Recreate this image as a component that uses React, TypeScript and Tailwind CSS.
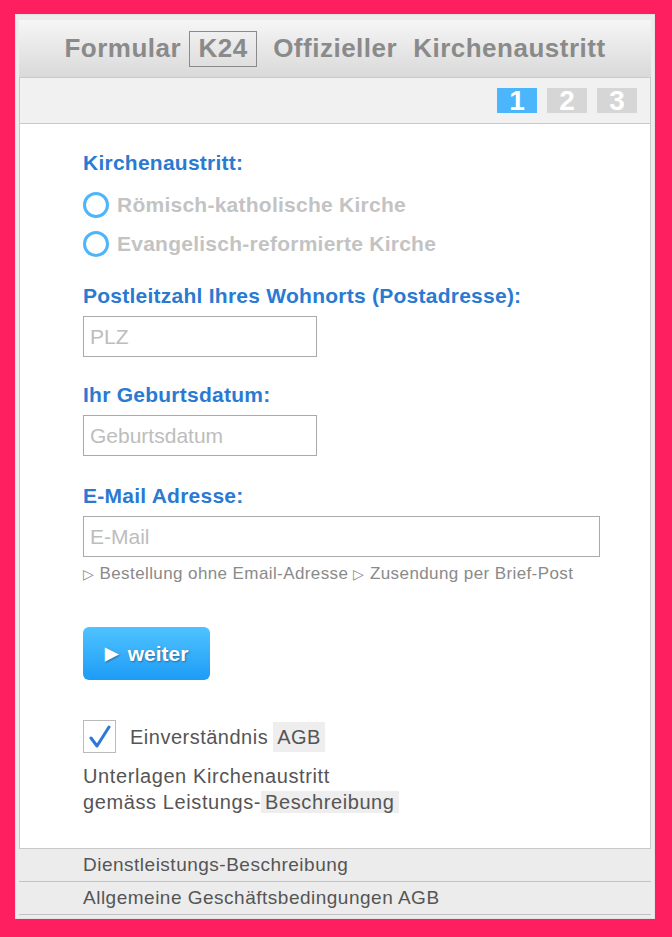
import React from "react";

const font = { fontFamily: '"Liberation Sans", Arial, sans-serif' };

function Radio({ label }: { label: string }) {
  return (
    <div className="flex h-[39px] items-center">
      <span className="h-[26px] w-[26px] shrink-0 rounded-full border-[3px] border-[#4db5fb] bg-white" />
      <span className="ml-[8px] text-[21px] font-bold tracking-[0.25px] text-[#c3c3c3]">{label}</span>
    </div>
  );
}

function Field({ label, placeholder, wide }: { label: string; placeholder: string; wide?: boolean }) {
  return (
    <div className="flex flex-col">
      <div className="text-[21px] font-bold leading-[24px] tracking-[0.25px] text-[#2a7ad2]">{label}</div>
      <div
        className={
          "mt-[8px] flex h-[41px] items-center border border-[#aaaaaa] bg-white px-[6px] text-[21px] text-[#bdbdbd] " +
          (wide ? "w-[517px]" : "w-[234px]")
        }
      >
        {placeholder}
      </div>
    </div>
  );
}

export default function App() {
  return (
    <div className="min-h-screen bg-[#fd1f60] pb-[18px] pl-[15px] pr-[17px] pt-[14px]" style={font}>
      <div className="flex h-[905px] flex-col border border-[#e2e2e2] bg-[#ececec] px-[3px] pt-[5px]">
        {/* title */}
        <div className="flex h-[57px] items-center justify-center bg-gradient-to-b from-[#f6f6f6] to-[#d9d9d9] text-[26px] font-bold tracking-[0.5px] text-[#8a8a8a]">
          <span>Formular</span>
          <span className="ml-[8px] flex h-[36px] w-[68px] items-center justify-center border border-[#8a8a8a]">K24</span>
          <span className="ml-[16px]">Offizieller</span>
          <span className="ml-[16px]">Kirchenaustritt</span>
        </div>

        <div className="flex flex-col border border-[#c9c9c9]">
          {/* steps */}
          <div className="flex h-[46px] justify-end gap-[10px] border-b border-[#c9c9c9] bg-[#f1f1f1] pr-[13px] pt-[10px]">
            <span className="flex h-[25px] w-[40px] items-center justify-center bg-[#4bb6fb] text-[28px] font-bold text-white">1</span>
            <span className="flex h-[25px] w-[40px] items-center justify-center bg-[#d6d6d6] text-[28px] font-bold text-white">2</span>
            <span className="flex h-[25px] w-[40px] items-center justify-center bg-[#d6d6d6] text-[28px] font-bold text-white">3</span>
          </div>

          {/* form */}
          <div className="flex h-[724px] flex-col bg-white pl-[63px] pt-[27px]">
            <div className="text-[21px] font-bold leading-[24px] tracking-[0.25px] text-[#2a7ad2]">Kirchenaustritt:</div>
            <div className="mt-[10px] flex flex-col">
              <Radio label="Römisch-katholische Kirche" />
              <Radio label="Evangelisch-reformierte Kirche" />
            </div>

            <div className="mt-[21px]">
              <Field label="Postleitzahl Ihres Wohnorts (Postadresse):" placeholder="PLZ" />
            </div>
            <div className="mt-[26px]">
              <Field label="Ihr Geburtsdatum:" placeholder="Geburtsdatum" />
            </div>
            <div className="mt-[28px]">
              <Field label="E-Mail Adresse:" placeholder="E-Mail" wide />
            </div>
            <div className="mt-[7px] text-[17px] leading-[20px] tracking-[0.4px] text-[#8a8a8a]">
              <span className="text-[14px]">▷</span> Bestellung ohne Email-Adresse <span className="text-[14px]">▷</span> Zusendung per Brief-Post
            </div>

            <button className="mt-[43px] flex h-[53px] w-[127px] items-center justify-center gap-[10px] rounded-[6px] bg-gradient-to-b from-[#4ec3ff] to-[#1b9cf6] text-[21px] font-bold text-white [text-shadow:1px_1px_2px_rgba(0,0,0,0.35)]">
              <span className="text-[17px]">▶</span>
              <span>weiter</span>
            </button>

            <div className="mt-[40px] flex items-center">
              <span className="flex h-[33px] w-[33px] items-center justify-center border border-[#bbbbbb]">
                <svg width="24" height="24" viewBox="0 0 24 24" fill="none">
                  <path d="M3 13 L9 21 L21 2" stroke="#2c78d6" strokeWidth="3" strokeLinecap="round" strokeLinejoin="round" />
                </svg>
              </span>
              <span className="ml-[14px] text-[20px] tracking-[0.5px] text-[#555555]">Einverständnis</span>
              <span className="ml-[5px] bg-[#eeeeee] px-[4px] text-[20px] tracking-[0.5px] text-[#555555]">AGB</span>
            </div>

            <div className="mt-[10px] text-[20px] leading-[26px] tracking-[0.6px] text-[#555555]">
              <div>Unterlagen Kirchenaustritt</div>
              <div>
                gemäss Leistungs-<span className="bg-[#eeeeee] px-[4px]">Beschreibung</span>
              </div>
            </div>
          </div>
        </div>

        {/* footer links */}
        <div className="flex h-[33px] items-center border-b border-[#c2c2c2] pl-[64px] text-[19px] tracking-[0.5px] text-[#555555]">
          Dienstleistungs-Beschreibung
        </div>
        <div className="flex h-[33px] items-center border-b border-[#c2c2c2] pl-[64px] text-[19px] tracking-[0.5px] text-[#555555]">
          Allgemeine Geschäftsbedingungen AGB
        </div>
      </div>
    </div>
  );
}
